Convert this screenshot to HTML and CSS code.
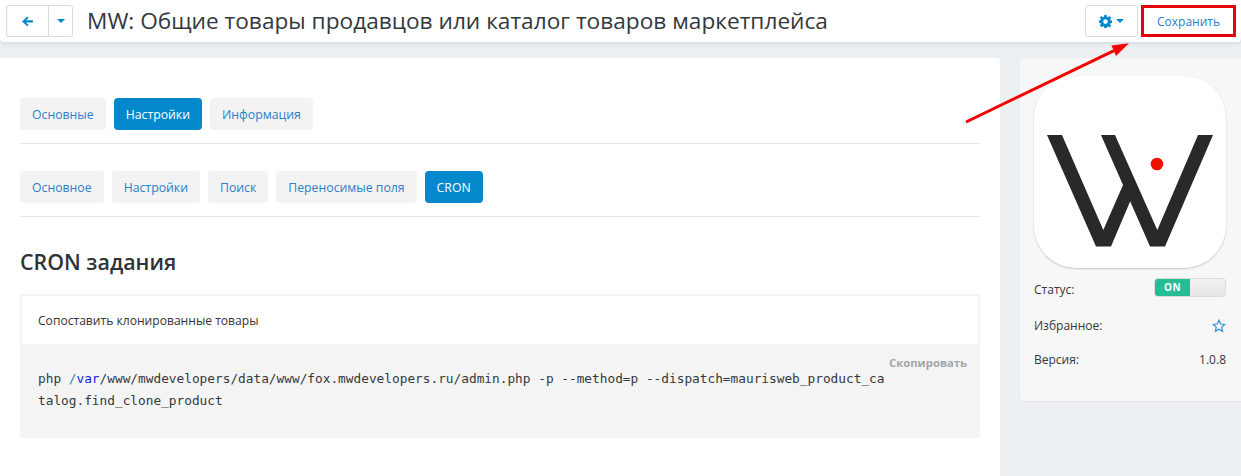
FILE: index.html
```html
<!DOCTYPE html>
<html lang="ru">
<head>
<meta charset="utf-8">
<title>MW</title>
<link rel="stylesheet" href="styles.css">
</head>
<body>
<header class="topbar">
  <div class="btn-group">
    <a class="btn btn-back"><svg width="13" height="11" viewBox="0 0 13 12"><path d="M6.200 0.600 7.700 2.100 4.900 4.600H12.400V7.200H4.900L7.700 9.800 6.200 11.300 0.600 5.900Z" fill="#0388cc"/></svg></a>
    <a class="btn btn-caret"><span class="caret"></span></a>
  </div>
  <h1 class="title">MW: Общие товары продавцов или каталог товаров маркетплейса</h1>
  <a class="btn btn-gear"><svg width="13" height="13" viewBox="0 0 13 13"><path fill="#0388cc" fill-rule="evenodd" d="M5.300 0h2.400l.3 1.800 1 .4L10.500 1.100l1.700 1.700-1.100 1.500.4 1 1.900.3v2.400l-1.900.3-.4 1 1.100 1.500-1.700 1.700-1.500-1.100-1 .4-.3 1.900H5.300L5 11.600l-1-.4-1.500 1.100L.8 10.600 1.900 9.100l-.4-1L0 7.800V5.400l1.500-.3.4-1L.8 2.800 2.500 1.100 4 2.200l1-.4ZM6.500 4.300a2.300 2.300 0 1 0 0 4.600 2.300 2.300 0 0 0 0-4.600Z"/></svg><span class="caret"></span></a>
  <a class="btn-save">Сохранить</a>
</header>

<div class="layout">
  <main class="content">
    <nav class="tabs tabs-first">
      <a class="tab">Основные</a>
      <a class="tab tab-active">Настройки</a>
      <a class="tab">Информация</a>
    </nav>
    <nav class="tabs tabs-second">
      <a class="tab">Основное</a>
      <a class="tab">Настройки</a>
      <a class="tab">Поиск</a>
      <a class="tab">Переносимые поля</a>
      <a class="tab tab-active">CRON</a>
    </nav>
    <h2 class="section-title">CRON задания</h2>
    <section class="cron">
      <div class="cron-name">Сопоставить клонированные товары</div>
      <div class="cron-code">
        <a class="copy">Скопировать</a>
        <code class="code">php <span class="slash">/</span><span class="kw">var</span>/www/mwdevelopers/data/www/fox.mwdevelopers.ru/admin.php -p --method=p --dispatch=maurisweb_product_catalog.find_clone_product</code>
      </div>
    </section>
  </main>

  <aside class="side">
    <div class="logo">
      <svg width="192" height="192" viewBox="0 0 192 192">
        <path fill="#292929" d="M13 59H28L69.300 154 89 109 98 115 96 125.700 77 170.500H62Z"/>
        <path fill="#292929" d="M67 59H81L123.300 154 164 59H179L131 170.500H116Z"/>
        <circle cx="123" cy="88" r="6.300" fill="#ee1100"/>
      </svg>
    </div>
    <div class="row row-status">
      <span>Статус:</span>
      <span class="switch"><span class="switch-on">ON</span><span class="switch-off"></span></span>
    </div>
    <div class="row row-fav">
      <span>Избранное:</span>
      <svg width="14" height="14" viewBox="0 0 14 14"><path d="M7 1.200 8.700 5 12.800 5.400 9.700 8.200 10.600 12.300 7 10.200 3.400 12.300 4.300 8.200 1.200 5.400 5.300 5Z" fill="none" stroke="#2e8fd6" stroke-width="1.200"/></svg>
    </div>
    <div class="row row-version">
      <span>Версия:</span>
      <span>1.0.8</span>
    </div>
  </aside>
</div>

<svg class="arrow" width="190" height="90" viewBox="0 0 190 90">
  <path d="M2 82 150 10.700" stroke="#f40000" stroke-width="3" fill="none"/>
  <path d="M165 3.300 147.500 5.500 152 16Z" fill="#f40000"/>
</svg>
</body>
</html>
```
FILE: styles.css
```css
* { box-sizing: border-box; }
html, body { margin: 0; padding: 0; height: 476px; overflow: hidden; }
body {
  background: #edf0f3;
  font-family: "Open Sans", sans-serif;
  font-size: 12px;
  color: #333;
  position: relative;
}
.topbar {
  height: 42px;
  background: #fff;
  box-shadow: 0 1px 5px rgba(0,0,0,.12);
  border-radius: 0 0 4px 4px;
  display: flex;
  align-items: center;
  padding: 0 5px 0 6px;
  position: relative;
}
.btn-group { display: flex; }
.btn {
  display: flex;
  align-items: center;
  justify-content: center;
  height: 32px;
  background: #fff;
  border: 1px solid #d6dbe1;
}
.btn-back { width: 42px; border-radius: 3px 0 0 3px; border-right: 0; }
.btn-caret { width: 25px; border-radius: 0 3px 3px 0; }
.caret {
  display: inline-block;
  width: 0; height: 0;
  border-left: 4px solid transparent;
  border-right: 4px solid transparent;
  border-top: 4px solid #0388cc;
}
.title {
  flex: 1;
  margin: 0 0 0 14px;
  font-size: 22.660px;
  font-weight: 400;
  color: #33383d;
  line-height: 32px;
  white-space: nowrap;
}
.btn-gear { width: 53px; gap: 4px; border-radius: 3px; margin-right: 3px; }
.btn-save {
  width: 95px;
  height: 32px;
  display: flex;
  align-items: center;
  justify-content: center;
  border: 3px solid #e8000d;
  color: #2a7fc9;
  font-size: 12px;
  background: #fff;
}
.layout {
  display: flex;
  align-items: flex-start;
  gap: 20px;
  margin-top: 16px;
}
.content {
  width: 1000px;
  height: 418px;
  flex: none;
  background: #fff;
  border-radius: 0 4px 0 0;
  padding: 40px 20px 0;
}
.tabs {
  display: flex;
  gap: 8px;
  padding-bottom: 13px;
  border-bottom: 1px solid #e2e6ee;
}
.tabs-second { margin-top: 27px; }
.tab {
  height: 32px;
  padding: 0 12px;
  display: flex;
  align-items: center;
  background: #f3f3f4;
  border-radius: 4px;
  color: #2a7fc9;
  font-size: 12.280px;
}
.tab-active { background: #0388cc; color: #fff; font-weight: 400; }
.section-title {
  margin: 30px 0 0;
  font-size: 21.400px;
  line-height: 30px;
  font-weight: 600;
  color: #2f3338;
}
.cron { margin-top: 17px; border-radius: 3px; background: #f4f4f4; }
.cron-name {
  height: 50px;
  padding: 0 16px;
  display: flex;
  align-items: center;
  background: #fff;
  border: 2px solid #f4f4f4;
  border-bottom: 0;
  font-size: 12.100px;
  color: #333;
}
.cron-code {
  position: relative;
  padding: 24px 92px 25px 18px;
  height: 94px;
}
.copy {
  position: absolute;
  top: 11px;
  right: 13px;
  font-size: 11.300px;
  font-weight: 700;
  color: #a3a6a9;
}
.code {
  display: block;
  font-family: "DejaVu Sans Mono", monospace;
  font-size: 12.790px;
  line-height: 22px;
  word-break: break-all;
  color: #33383d;
}
.slash { color: #2a7fc9; }
.kw { color: #1a1ae0; }
.side {
  width: 221px;
  height: 343px;
  flex: none;
  background: #f7f7f7;
  border-radius: 4px 0 0 4px;
  box-shadow: 0 1px 2px rgba(0,0,0,.06);
  padding: 18px 15px 0 14px;
}
.logo {
  width: 192px;
  height: 192px;
  background: #fff;
  border-radius: 42px;
  box-shadow: 0 1px 2px rgba(0,0,0,.2);
  overflow: hidden;
}
.logo svg { display: block; }
.row {
  display: flex;
  justify-content: space-between;
  align-items: center;
  font-size: 12px;
  line-height: 18px;
  color: #33383d;
}
.row-status { margin-top: 13px; align-items: flex-start; }
.row-fav { margin-top: 18px; }
.row-version { margin-top: 16px; }
.switch {
  display: flex;
  width: 72px;
  height: 19px;
  margin-top: -3px;
  border: 1px solid #dcdcdc;
  border-radius: 4px;
  overflow: hidden;
  background: linear-gradient(#f2f2f2, #e6e6e6);
}
.switch-on {
  width: 35px;
  background: #25bd94;
  color: #fff;
  font-size: 10px;
  font-weight: 700;
  letter-spacing: .5px;
  line-height: 17px;
  text-align: center;
}
.arrow {
  position: absolute;
  left: 964px;
  top: 40px;
}
```
